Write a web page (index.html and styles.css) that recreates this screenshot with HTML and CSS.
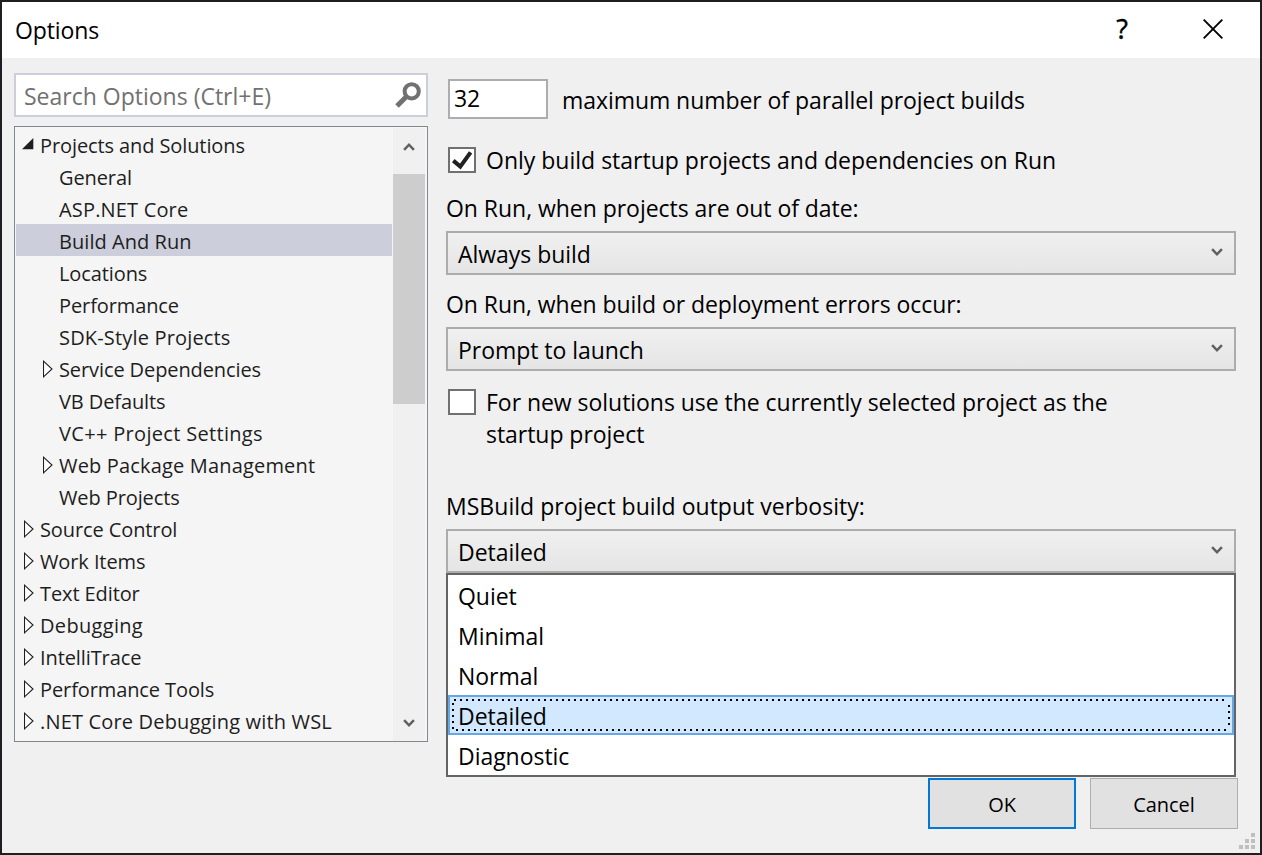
FILE: index.html
```
<!DOCTYPE html>
<html lang="en">
<head>
<meta charset="utf-8">
<title>Options</title>
<link rel="stylesheet" href="styles.css">
</head>
<body>
<svg width="0" height="0" class="defs">
  <symbol id="closed" viewBox="0 0 10 18"><path d="M.5 1.2v15.6L9 9z" fill="#fff" stroke="#1e1e1e" stroke-width="1.1"/></symbol>
  <symbol id="down" viewBox="0 0 12 10"><path d="M1.1 1.2 6 6.3l4.9-5.1" fill="none" stroke="#606060" stroke-width="2.5"/></symbol>
</svg>
<main class="dialog">
  <header class="titlebar">
    <h1 class="title">Options</h1>
    <span class="help">?</span>
    <svg class="close" width="20" height="20" viewBox="0 0 20 20"><path d="M.7.7l18.6 18.6M19.3.7.7 19.3" stroke="#000" stroke-width="1.9"/></svg>
  </header>
  <div class="body">
    <aside class="side">
      <div class="search"><span>Search Options (Ctrl+E)</span>
        <svg width="26" height="26" viewBox="0 0 26 26"><circle cx="16.7" cy="9.3" r="7.1" fill="none" stroke="#717171" stroke-width="4"/><path d="M11.5 14.5 2 24" stroke="#717171" stroke-width="5"/></svg>
      </div>
      <div class="tree">
        <ul class="rows">
          <li class="open"><svg width="12" height="12" viewBox="0 0 12 12"><path d="M11.3 0v11.2H0z" fill="#1e1e1e"/></svg>Projects and Solutions</li>
          <li class="leaf">General</li>
          <li class="leaf wide">ASP.NET Core</li>
          <li class="leaf selected">Build And Run</li>
          <li class="leaf">Locations</li>
          <li class="leaf">Performance</li>
          <li class="leaf wide">SDK-Style Projects</li>
          <li class="child"><svg width="10" height="18"><use href="#closed"/></svg>Service Dependencies</li>
          <li class="leaf">VB Defaults</li>
          <li class="leaf wider">VC++ Project Settings</li>
          <li class="child wide"><svg width="10" height="18"><use href="#closed"/></svg>Web Package Management</li>
          <li class="leaf">Web Projects</li>
          <li><svg width="10" height="18"><use href="#closed"/></svg>Source Control</li>
          <li><svg width="10" height="18"><use href="#closed"/></svg>Work Items</li>
          <li><svg width="10" height="18"><use href="#closed"/></svg>Text Editor</li>
          <li class="wider"><svg width="10" height="18"><use href="#closed"/></svg>Debugging</li>
          <li><svg width="10" height="18"><use href="#closed"/></svg>IntelliTrace</li>
          <li><svg width="10" height="18"><use href="#closed"/></svg>Performance Tools</li>
          <li class="wide"><svg width="10" height="18"><use href="#closed"/></svg>.NET Core Debugging with WSL</li>
        </ul>
        <div class="scrollbar">
          <svg class="up" width="12" height="10"><use href="#down"/></svg>
          <div class="thumb"></div>
          <svg class="dn" width="12" height="10"><use href="#down"/></svg>
        </div>
      </div>
    </aside>
    <section class="settings">
      <div class="parallel"><div class="number">32</div><span>maximum number of parallel project builds</span></div>
      <div class="check first"><i class="box"><svg width="24" height="22" viewBox="0 0 24 22"><path d="M3.3 11.6 10.3 17.6 20.6 3.4" fill="none" stroke="#212121" stroke-width="4.1"/></svg></i><span>Only build startup projects and dependencies on Run</span></div>
      <div class="label">On Run, when projects are out of date:</div>
      <div class="combo"><span>Always build</span><svg width="12" height="10"><use href="#down"/></svg></div>
      <div class="label second">On Run, when build or deployment errors occur:</div>
      <div class="combo"><span>Prompt to launch</span><svg width="12" height="10"><use href="#down"/></svg></div>
      <div class="check last"><i class="box"></i><span>For new solutions use the currently selected project as the<br>startup project</span></div>
      <div class="label third">MSBuild project build output verbosity:</div>
      <div class="combo"><span>Detailed</span><svg width="12" height="10"><use href="#down"/></svg></div>
      <ul class="options">
        <li>Quiet</li>
        <li>Minimal</li>
        <li>Normal</li>
        <li class="active">Detailed<svg class="focus" width="778" height="32"><path d="M2 1H776M4 31H776" stroke-dasharray="2 4"/><path d="M1 4V30M777 6V30" stroke-dasharray="2 4"/></svg></li>
        <li>Diagnostic</li>
      </ul>
      <div class="buttons"><div class="button ok">OK</div><div class="button">Cancel</div></div>
    </section>
  </div>
  <svg class="grip" width="16" height="16" fill="#bfbfbf"><path d="M12 0h4v4h-4zM6 6h4v4H6zM12 6h4v4h-4zM0 12h4v4H0zM6 12h4v4H6zM12 12h4v4h-4z"/></svg>
</main>
</body>
</html>
```
FILE: styles.css
```
* { box-sizing: border-box; margin: 0; padding: 0; }
html { background: #1f1f21; }
body {
  width: 1262px;
  height: 855px;
  padding: 2px;
  overflow: hidden;
  background: #1f1f21;
  color: #000;
  font: 23px/32px "Open Sans", "Noto Sans", sans-serif;
  white-space: nowrap;
}
ul { list-style: none; }
svg { display: block; flex: none; }
.defs { position: absolute; }

.dialog { position: relative; width: 1258px; height: 851px; background: #f0f0f0; }
.titlebar { display: flex; align-items: center; height: 56px; padding: 0 37px 0 13px; background: #fff; }
.title { flex: 1; font-size: 23px; font-weight: 400; letter-spacing: -.1px; }
.help { width: 12px; margin: -2px 75px 0 0; font-family: "Noto Sans", sans-serif; font-size: 27px; text-align: center; -webkit-text-stroke: .3px #000; }
.close { margin-top: -2px; }

.body { display: flex; padding: 15px 22px 0 12px; }
.side { width: 414px; margin-right: 18px; }
.search {
  display: flex;
  justify-content: space-between;
  height: 44px;
  padding: 5px 5px 0 8px;
  border: 2px solid #cccedb;
  background: #fff;
  color: #717171;
}
.tree {
  display: flex;
  height: 616px;
  margin-top: 9px;
  padding: 1px 2px 0 1px;
  border: 1px solid #828790;
  background: #f5f5f5;
  color: #1e1e1e;
  font-size: 20px;
}
.rows { width: 376px; letter-spacing: -.1px; }
.rows li { display: flex; height: 32px; padding: 2px 0 0 8px; }
.rows li svg { margin: 6px 6px 0 0; }
.rows .open { padding-left: 6px; }
.rows .open svg { margin: 8px 6px 0 0; }
.rows .leaf { padding-left: 43px; }
.rows .child { padding-left: 27px; }
.rows .selected { background: #cccedb; letter-spacing: .05px; }
.rows .wide { letter-spacing: .17px; }
.rows .wider { letter-spacing: .32px; }
.search svg { margin-top: 2px; }
.scrollbar { width: 32px; height: 613px; margin-left: 1px; padding-top: 13px; background: #f0f0f0; }
.scrollbar svg { margin-left: 10px; }
.up { transform: scaleY(-1); }
.thumb { height: 230px; margin: 23px 0 315px; background: #cdcdcd; }

.settings { width: 792px; padding-top: 6px; letter-spacing: -.04px; }
.parallel { display: flex; height: 40px; padding-left: 2px; letter-spacing: -.06px; }
.parallel span { margin: 5px 0 0 14px; }
.number { width: 100px; padding: 1px 4px; border: 2px solid #abadb3; background: #fff; }
.check { display: flex; padding-left: 2px; }
.check span { margin-left: 10px; }
.first { margin-top: 25px; letter-spacing: 0; }
.box { width: 28px; height: 26px; margin-top: 3px; border: 2px solid #707070; background: #fff; }
.label { margin: 16px 0 7px; }
.label.second { margin-top: 13px; letter-spacing: -.06px; }
.combo {
  display: flex;
  justify-content: space-between;
  width: 790px;
  height: 44px;
  padding: 5px 11px 0 10px;
  border: 2px solid #acacac;
  background: linear-gradient(#f0f0f0, #e5e5e5);
}
.combo svg { margin-top: 10px; }
.last { margin-top: 15px; }
.last .box { margin-top: 3px; }
.label.third { margin-top: 40px; letter-spacing: .03px; }
.options { width: 790px; height: 204px; border: 2px solid #646464; background: #fff; }
.options li { height: 40px; padding: 5px 0 0 10px; }
.options .active { position: relative; width: 786px; padding: 3px 0 0 8px; border: 2px solid #66a7e8; background: #d1e8ff; }
.focus { position: absolute; left: 2px; top: 2px; fill: none; stroke: #000; stroke-width: 2; }
.buttons { display: flex; justify-content: flex-end; gap: 14px; margin-top: 1px; }
.button {
  display: flex;
  align-items: center;
  justify-content: center;
  width: 148px;
  height: 51px;
  padding-top: 2px;
  border: 1px solid #adadad;
  background: #e1e1e1;
  font-size: 20px;
}
.ok { border: 2px solid #0078d7; }
.grip { position: absolute; right: 5px; bottom: 4px; }
```
